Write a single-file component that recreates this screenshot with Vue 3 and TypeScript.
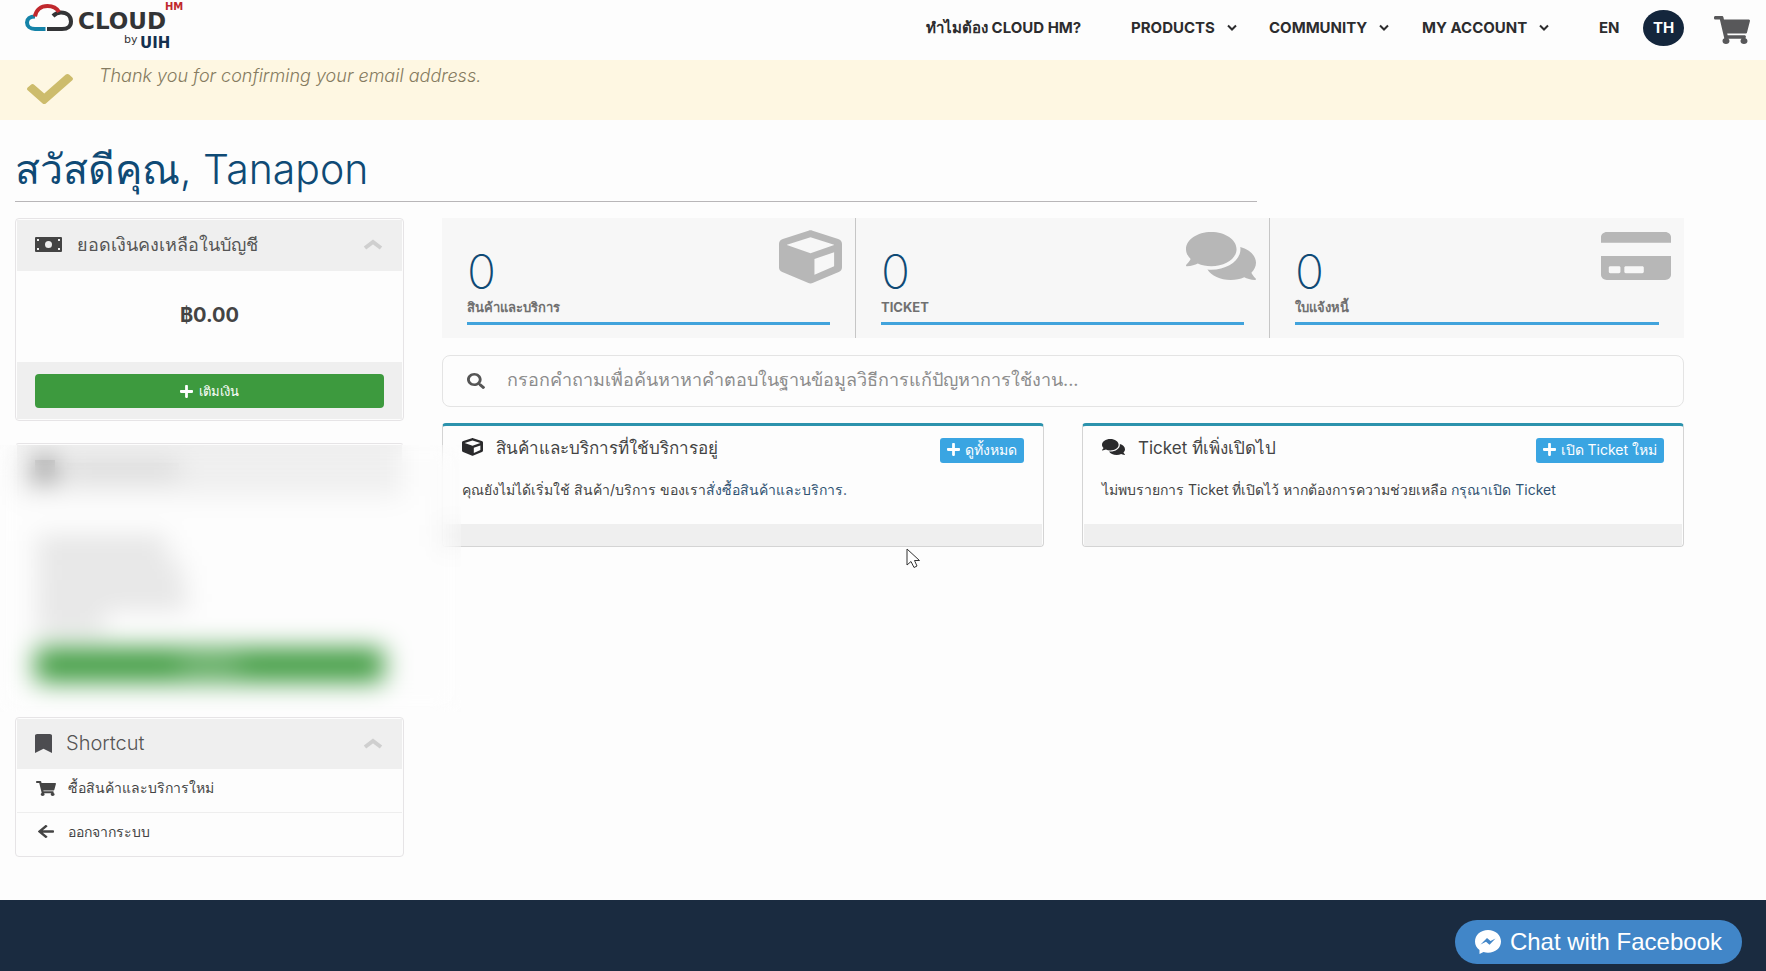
<script setup lang="ts">
import { ref } from 'vue'

interface Icon { box: string; d: string }

const icons: Record<string, Icon> = {
  cube: {
    box: '0 0 512 512',
    d: 'M239.1 6.3l-208 78c-18.7 7-31.1 25-31.1 45v225.1c0 18.2 10.3 34.8 26.5 42.9l208 104c13.5 6.8 29.4 6.8 42.9 0l208-104c16.3-8.1 26.5-24.8 26.5-42.9V129.3c0-20-12.4-37.9-31.1-44.9l-208-78C262 2.2 250 2.2 239.1 6.3zM256 68.4l192 72v1.1l-192 78-192-78v-1.1l192-72zm32 356V275.5l160-65v133.9l-160 80z',
  },
  comments: {
    box: '0 32 576 448',
    d: 'M416 192c0-88.4-93.1-160-208-160S0 103.6 0 192c0 34.3 14.1 65.9 38 92-13.4 30.2-35.5 54.2-35.8 54.5-2.2 2.3-2.8 5.7-1.5 8.7S4.8 352 8 352c36.6 0 66.9-12.3 88.7-25 32.2 15.7 70.3 25 111.3 25 114.9 0 208-71.6 208-160zm122 220c23.9-26 38-57.7 38-92 0-66.9-53.5-124.2-129.3-148.1.9 6.6 1.3 13.3 1.3 20.1 0 105.9-107.7 192-240 192-10.8 0-21.3-.8-31.7-1.9C207.8 439.6 281.8 480 368 480c41 0 79.1-9.2 111.3-25 21.8 12.7 52.1 25 88.7 25 3.2 0 6.1-1.9 7.3-4.8 1.3-2.9.7-6.3-1.5-8.7-.3-.3-22.4-24.2-35.8-54.5z',
  },
  credit: {
    box: '0 32 576 448',
    d: 'M0 432c0 26.500 21.500 48 48 48h480c26.500 0 48-21.500 48-48V256H0v176zm192-68c0-6.600 5.400-12 12-12h136c6.600 0 12 5.400 12 12v40c0 6.600-5.400 12-12 12H204c-6.600 0-12-5.400-12-12v-40zm-128 0c0-6.600 5.400-12 12-12h72c6.600 0 12 5.400 12 12v40c0 6.600-5.400 12-12 12H76c-6.600 0-12-5.400-12-12v-40zM576 80v52H0V80c0-26.500 21.500-48 48-48h480c26.500 0 48 21.500 48 48z',
  },
  cart: {
    box: '0 0 576 512',
    d: 'M528.12 301.319l47.273-208C578.806 78.301 567.391 64 551.99 64H159.208l-9.166-44.810C147.758 8.021 137.930 0 126.529 0H24C10.745 0 0 10.745 0 24v16c0 13.255 10.745 24 24 24h69.883l70.248 343.435C147.325 417.100 136 435.222 136 456c0 30.928 25.072 56 56 56s56-25.072 56-56c0-15.674-6.447-29.835-16.824-40h209.647C430.447 426.165 424 440.326 424 456c0 30.928 25.072 56 56 56s56-25.072 56-56c0-22.172-12.888-41.332-31.579-50.405l5.517-24.276c3.413-15.018-8.002-29.319-23.403-29.319H218.117l-6.545-32h293.145c11.206 0 20.920-7.754 23.403-18.681z',
  },
  check: {
    box: '0 65 512 382',
    d: 'M173.898 439.404l-166.400-166.400c-9.997-9.997-9.997-26.206 0-36.204l36.203-36.204c9.997-9.998 26.207-9.998 36.204 0L192 312.690 432.095 72.596c9.997-9.997 26.207-9.997 36.204 0l36.203 36.204c9.997 9.997 9.997 26.206 0 36.204l-294.400 294.401c-9.998 9.997-26.207 9.997-36.204-.001z',
  },
  plus: {
    box: '0 32 448 448',
    d: 'M416 208H272V64c0-17.670-14.330-32-32-32h-32c-17.670 0-32 14.330-32 32v144H32c-17.670 0-32 14.330-32 32v32c0 17.670 14.330 32 32 32h144v144c0 17.670 14.330 32 32 32h32c17.670 0 32-14.330 32-32V304h144c17.670 0 32-14.330 32-32v-32c0-17.670-14.330-32-32-32z',
  },
  search: {
    box: '0 0 512 512',
    d: 'M505 442.700L405.300 343c-4.500-4.500-10.600-7-17-7H372c27.600-35.300 44-79.700 44-128C416 93.100 322.900 0 208 0S0 93.100 0 208s93.100 208 208 208c48.300 0 92.700-16.400 128-44v16.300c0 6.400 2.500 12.500 7 17l99.700 99.700c9.400 9.400 24.600 9.400 33.900 0l28.300-28.300c9.400-9.400 9.400-24.600.1-34zM208 336c-70.700 0-128-57.200-128-128 0-70.700 57.200-128 128-128 70.700 0 128 57.200 128 128 0 70.700-57.200 128-128 128z',
  },
  bookmark: {
    box: '0 0 384 512',
    d: 'M0 512V48C0 21.490 21.490 0 48 0h288c26.510 0 48 21.490 48 48v464L192 400 0 512z',
  },
  arrow: {
    box: '0 40 448 432',
    d: 'M257.500 445.100l-22.200 22.200c-9.400 9.400-24.600 9.400-33.900 0L7 273c-9.400-9.400-9.400-24.600 0-33.900L201.400 44.700c9.400-9.400 24.600-9.400 33.900 0l22.200 22.200c9.500 9.500 9.300 25-.4 34.300L136.600 216H424c13.300 0 24 10.700 24 24v32c0 13.300-10.700 24-24 24H136.600l120.500 114.800c9.800 9.300 10 24.800.4 34.300z',
  },
  money: {
    box: '0 0 27 15',
    d: 'M1 0H26Q27 0 27 1V14Q27 15 26 15H1Q0 15 0 14V1Q0 0 1 0ZM13.500 4A3.500 3.500 0 1 0 13.500 11A3.500 3.500 0 1 0 13.500 4ZM2 2V4H4V2ZM23 2V4H25V2ZM2 11V13H4V11ZM23 11V13H25V11Z',
  },
}

const menu = [
  { label: 'ทำไมต้อง CLOUD HM?', sub: false },
  { label: 'PRODUCTS', sub: true },
  { label: 'COMMUNITY', sub: true },
  { label: 'MY ACCOUNT', sub: true },
]

const stats = [
  { count: 0, label: 'สินค้าและบริการ', icon: 'cube' },
  { count: 0, label: 'TICKET', icon: 'comments' },
  { count: 0, label: 'ใบแจ้งหนี้', icon: 'credit' },
]

const shortcuts = [
  { label: 'ซื้อสินค้าและบริการใหม่', icon: 'cart' },
  { label: 'ออกจากระบบ', icon: 'arrow' },
]

const panels = [
  {
    title: 'สินค้าและบริการที่ใช้บริการอยู่',
    icon: 'cube',
    action: 'ดูทั้งหมด',
    text: 'คุณยังไม่ได้เริ่มใช้ สินค้า/บริการ ของเรา',
    link: 'สั่งซื้อสินค้าและบริการ.',
  },
  {
    title: 'Ticket ที่เพิ่งเปิดไป',
    icon: 'comments',
    action: 'เปิด Ticket ใหม่',
    text: 'ไม่พบรายการ Ticket ที่เปิดไว้ หากต้องการความช่วยเหลือ ',
    link: 'กรุณาเปิด Ticket',
  },
]

const query = ref('')
</script>

<template>
  <div class="page">
    <header class="topbar">
      <a class="logo" href="#" aria-label="Cloud HM by UIH">
        <svg class="cloud" viewBox="0 0 48 28" fill="none" stroke-width="4">
          <path d="M22 25H37C43 25 46 22 46 17.500C46 12 42 8.500 36 8.500C33 8.500 30 10 28 12" stroke="#333436" />
          <path d="M20.500 25H10C5 25 2 22 2 18.500C2 15 5 12.500 10 12.500" stroke="#1583a8" />
          <path d="M10 12.500C11 6 16 2 22.500 2C28 2 32 4.500 34 8" stroke="#c0282d" />
        </svg>
        <span class="brand">CLOUD</span>
        <span class="hm">HM</span>
        <span class="by">by</span>
        <span class="uih">UIH</span>
      </a>
      <nav class="menu" aria-label="Main">
        <a v-for="m in menu" :key="m.label" href="#">
          {{ m.label }}
          <svg v-if="m.sub" class="caret" viewBox="0 0 10 8" fill="none" stroke="currentColor" stroke-width="2">
            <path d="M1 1.500L5 5.500L9 1.500" />
          </svg>
        </a>
        <a href="#">EN</a>
        <a class="lang" href="#" aria-current="true">TH</a>
        <a href="#" aria-label="Cart">
          <svg class="basket" :viewBox="icons.cart.box" preserveAspectRatio="none"><path :d="icons.cart.d" /></svg>
        </a>
      </nav>
    </header>

    <div class="notice" role="status">
      <svg :viewBox="icons.check.box" preserveAspectRatio="none"><path :d="icons.check.d" /></svg>
      <em>Thank you for confirming your email address.</em>
    </div>

    <main>
      <h1>สวัสดีคุณ, Tanapon</h1>
      <div class="columns">
        <aside>
          <section class="card">
            <h2 class="card-head">
              <svg class="money" :viewBox="icons.money.box" preserveAspectRatio="none"><path fill-rule="evenodd" :d="icons.money.d" /></svg>
              ยอดเงินคงเหลือในบัญชี
              <svg class="fold" viewBox="0 0 20 11" fill="none"><path d="M2 9L10 3L18 9" /></svg>
            </h2>
            <p class="balance">฿0.00</p>
            <div class="card-foot">
              <button type="button" class="green">
                <svg class="plus" :viewBox="icons.plus.box"><path :d="icons.plus.d" /></svg>เติมเงิน
              </button>
            </div>
          </section>

          <section class="card private" aria-hidden="true">
            <div class="card-head"><i class="dot"></i><i class="name"></i></div>
            <div class="lines"><i></i><i></i><i></i><i></i></div>
            <div class="card-foot plain"><div class="green"><i></i></div></div>
            <div class="veil"></div>
          </section>

          <section class="card">
            <h2 class="card-head latin">
              <svg class="mark" :viewBox="icons.bookmark.box" preserveAspectRatio="none"><path :d="icons.bookmark.d" /></svg>
              Shortcut
              <svg class="fold" viewBox="0 0 20 11" fill="none"><path d="M2 9L10 3L18 9" /></svg>
            </h2>
            <a v-for="s in shortcuts" :key="s.label" class="shortcut" href="#">
              <span><svg :class="s.icon" :viewBox="icons[s.icon].box" preserveAspectRatio="none"><path :d="icons[s.icon].d" /></svg></span>
              {{ s.label }}
            </a>
          </section>
        </aside>

        <div class="content">
          <div class="stats">
            <a v-for="s in stats" :key="s.label" class="stat" href="#">
              <svg :class="s.icon" :viewBox="icons[s.icon].box" preserveAspectRatio="none"><path :d="icons[s.icon].d" /></svg>
              <span class="count">{{ s.count }}</span>
              <span class="label">{{ s.label }}</span>
            </a>
          </div>

          <label class="search">
            <svg :viewBox="icons.search.box" preserveAspectRatio="none"><path :d="icons.search.d" /></svg>
            <input v-model="query" type="text" aria-label="Search" placeholder="กรอกคำถามเพื่อค้นหาหาคำตอบในฐานข้อมูลวิธีการแก้ปัญหาการใช้งาน..." />
          </label>

          <div class="panels">
            <section v-for="p in panels" :key="p.title" class="panel">
              <div class="panel-head">
                <svg :class="p.icon" :viewBox="icons[p.icon].box" preserveAspectRatio="none"><path :d="icons[p.icon].d" /></svg>
                <h3>{{ p.title }}</h3>
                <button type="button"><svg class="plus" :viewBox="icons.plus.box"><path :d="icons.plus.d" /></svg>{{ p.action }}</button>
              </div>
              <p>{{ p.text }}<a href="#">{{ p.link }}</a></p>
              <div class="panel-foot"></div>
            </section>
          </div>
        </div>
      </div>
    </main>

    <footer>
      <button type="button" class="chat">
        <svg viewBox="0 0 26 24">
          <path fill="#fff" d="M13 0C5.500 0 0 5 0 11.500C0 15 1.500 18 4.500 20V24L8.500 22C10 22.500 11.500 22.700 13 22.700C20.500 22.700 26 18 26 11.500C26 5 20.500 0 13 0Z" />
          <path fill="#4186c8" d="M5.500 14.500L12 8L15.500 11L20.500 8.500L14.500 14.800L11 11.800Z" />
        </svg>
        Chat with Facebook
      </button>
    </footer>

    <svg class="pointer" viewBox="0 0 15 21"><path d="M1 1V17L5 13.500L8 19.500L11 18L8.500 12.500H13.500Z" fill="#fff" stroke="#333" /></svg>
  </div>
</template>

<style>
body {
  margin: 0;
  background: #fdfdfd;
}
</style>

<style scoped>
* {
  box-sizing: border-box;
}

.page {
  position: relative;
  display: flex;
  flex-direction: column;
  min-height: 100vh;
  font-family: Inter, "Noto Sans", sans-serif;
  font-size: 14px;
  line-height: 20px;
  color: #444;
}

a {
  color: inherit;
  text-decoration: none;
}

button {
  border: 0;
  font: inherit;
  cursor: pointer;
}

svg {
  display: block;
  flex: none;
  fill: currentColor;
}

svg[fill='none'] {
  fill: none;
}

h1,
h2,
h3,
p {
  margin: 0;
}

.topbar {
  display: flex;
  justify-content: space-between;
  height: 60px;
  padding: 0 16px 0 25px;
}

.logo {
  position: relative;
  width: 160px;
  font-family: "DejaVu Sans", sans-serif;
  font-weight: 700;
  color: #333436;
}

.cloud {
  position: absolute;
  top: 4px;
  left: 0;
  width: 48px;
  height: 28px;
}

.brand,
.hm,
.by,
.uih {
  position: absolute;
  line-height: 1;
}

.brand {
  top: 10px;
  left: 53px;
  font-size: 23px;
}

.hm {
  top: 2px;
  left: 140px;
  font-size: 10px;
  color: #c0282d;
}

.by {
  top: 34px;
  left: 99px;
  font-size: 11px;
  font-weight: 400;
}

.uih {
  top: 36px;
  left: 115px;
  font-size: 15px;
  color: #14304f;
}

.menu {
  display: grid;
  grid-template-columns: 205px 138px 153px 177px 44px 71px 36px;
  align-items: center;
  height: 56px;
  font-size: 15px;
  font-weight: 700;
  color: #2c2c2e;
}

.menu a {
  display: flex;
  align-items: center;
  gap: 12px;
}

.caret {
  width: 10px;
  height: 8px;
}

.menu .lang {
  justify-content: center;
  width: 41px;
  height: 36px;
  border-radius: 50%;
  background: #14263c;
  color: #fff;
}

.basket {
  width: 36px;
  height: 28px;
  margin-top: 4px;
  color: #58585a;
}

.notice {
  display: flex;
  gap: 26px;
  height: 60px;
  padding: 6px 27px;
  background: #fef7e2;
  font-size: 18px;
  font-weight: 300;
  color: #857b60;
}

.notice svg {
  width: 46px;
  height: 30px;
  margin-top: 8px;
  color: #cdbc6c;
}

main {
  padding: 25px 82px 43px 15px;
}

h1 {
  width: 1242px;
  max-width: 100%;
  height: 57px;
  border-bottom: 1px solid #b8b6b8;
  font-size: 41px;
  font-weight: 300;
  line-height: 48px;
  color: #0f4a75;
}

.columns {
  display: grid;
  grid-template-columns: 389fr 1242fr;
  gap: 38px;
  margin-top: 16px;
}

aside {
  display: flex;
  flex-direction: column;
  gap: 22px;
}

.card {
  position: relative;
  padding: 1px;
  border: 1px solid #e6e4e6;
  border-radius: 4px;
}

.card-head {
  display: flex;
  align-items: center;
  height: 51px;
  padding: 0 19px 2px 18px;
  background: #efefef;
  font-size: 18px;
  font-weight: 400;
  color: #555;
}

.latin {
  height: 50px;
  font-size: 20px;
  font-weight: 300;
}

.card-head .money {
  width: 27px;
  height: 15px;
  margin-right: 15px;
  color: #444;
}

.card-head .mark {
  width: 17px;
  height: 19px;
  margin-right: 14px;
  color: #4c4c50;
}

.fold {
  width: 20px;
  height: 11px;
  margin-left: auto;
  stroke: #cfcfcf;
  stroke-width: 4;
}

.balance {
  padding: 29px 0 31px;
  font-size: 20px;
  font-weight: 700;
  line-height: 31px;
  text-align: center;
}

.card-foot {
  padding: 12px 18px 11px;
  background: #efefef;
}

.green {
  display: flex;
  align-items: center;
  justify-content: center;
  gap: 6px;
  width: 100%;
  height: 34px;
  border-radius: 4px;
  background: #3d9a3e;
  font-size: 13px;
  color: #fff;
}

.plus {
  width: 13px;
  height: 13px;
}

.private {
  border-color: #e6e4e6 transparent transparent;
}

.private i {
  display: block;
  background: #d2d2d2;
}

.private .dot {
  width: 20px;
  height: 20px;
  background: #777;
}

.private .name {
  width: 112px;
  height: 13px;
  margin-left: 12px;
}

.lines {
  display: grid;
  gap: 8px;
  height: 140px;
  padding: 42px 20px 4px;
}

.lines i {
  width: 130px;
  background: #dedede;
}

.lines i:nth-child(2) {
  width: 145px;
}

.lines i:nth-child(3) {
  width: 150px;
}

.lines i:nth-child(4) {
  width: 68px;
}

.plain {
  background: none;
}

.private .green i {
  width: 60px;
  height: 10px;
  background: #8fc48f;
}

.veil {
  position: absolute;
  z-index: 2;
  top: 1px;
  right: -58px;
  bottom: -18px;
  left: -16px;
  backdrop-filter: blur(13px);
}

.shortcut {
  display: flex;
  align-items: center;
  height: 43px;
  padding: 0 18px 5px;
}

.shortcut + .shortcut {
  border-top: 1px solid #eee;
}

.shortcut span {
  display: grid;
  place-items: center;
  width: 22px;
  margin-right: 11px;
}

.shortcut .cart {
  width: 20px;
  height: 15px;
}

.shortcut .arrow {
  width: 16px;
  height: 13px;
}

.stats {
  display: grid;
  grid-template-columns: repeat(3, 1fr);
  height: 120px;
  background: #f7f7f7;
}

.stat {
  position: relative;
  padding: 30px 25px 13px;
}

.stat:not(:last-child) {
  border-right: 1px solid #c6c6c6;
}

.stat svg {
  position: absolute;
  top: 14px;
  right: 13px;
  width: 70px;
  height: 48px;
  color: #b7b7b7;
}

.stat .cube {
  top: 12px;
  width: 63px;
  height: 54px;
}

.count {
  display: block;
  font-size: 48px;
  font-weight: 200;
  line-height: 48px;
  color: #0f4a75;
}

.label {
  display: block;
  height: 29px;
  border-bottom: 3px solid #41a3dc;
  font-size: 13px;
  font-weight: 700;
  line-height: 22px;
  color: #707070;
}

.search {
  display: flex;
  align-items: center;
  gap: 22px;
  height: 52px;
  margin-top: 17px;
  padding: 0 24px;
  border: 1px solid #e4e4e4;
  border-radius: 8px;
}

.search svg {
  width: 18px;
  height: 16px;
  color: #555;
}

.search input {
  flex: 1;
  height: 40px;
  padding: 0 0 4px;
  border: 0;
  outline: 0;
  background: none;
  font: inherit;
  font-size: 18px;
  color: #555;
}

.search input::placeholder {
  color: #8c8c8c;
  opacity: 1;
}

.panels {
  display: grid;
  grid-template-columns: 1fr 1fr;
  gap: 38px;
  margin-top: 16px;
}

.panel {
  padding: 0 1px;
  border: 1px solid #d4d4d4;
  border-top: 3px solid #2c93ad;
  border-radius: 4px;
}

.panel-head {
  display: flex;
  align-items: flex-start;
  height: 49px;
  padding: 12px 18px 0;
}

.panel-head svg {
  color: #2a2a2c;
}

.panel-head .cube {
  width: 21px;
  height: 18px;
}

.panel-head .comments {
  width: 23px;
  height: 16px;
  margin-top: 1px;
}

h3 {
  margin-left: 13px;
  font-size: 17px;
  font-weight: 400;
}

.panel-head button {
  display: flex;
  align-items: center;
  gap: 5px;
  height: 25px;
  margin-left: auto;
  padding: 0 7px 2px;
  border-radius: 3px;
  background: #3aa5e2;
  font-size: 14px;
  color: #fff;
}

.panel-head .plus {
  color: #fff;
}

.panel p {
  height: 49px;
  padding: 5px 18px 0;
}

.panel p a {
  color: #2f5272;
}

.panel-foot {
  height: 22px;
  background: #efefef;
}

footer {
  display: flex;
  flex: 1;
  justify-content: flex-end;
  align-items: flex-start;
  min-height: 70px;
  padding: 20px 24px 6px;
  background: #1a2b40;
}

.chat {
  display: flex;
  align-items: center;
  gap: 9px;
  height: 44px;
  padding: 0 20px;
  border-radius: 22px;
  background: #4186c8;
  font-family: "Liberation Sans", sans-serif;
  font-size: 24px;
  color: #fff;
}

.chat svg {
  width: 26px;
  height: 24px;
}

.pointer {
  position: absolute;
  top: 548px;
  left: 906px;
  width: 15px;
  height: 21px;
}
</style>
